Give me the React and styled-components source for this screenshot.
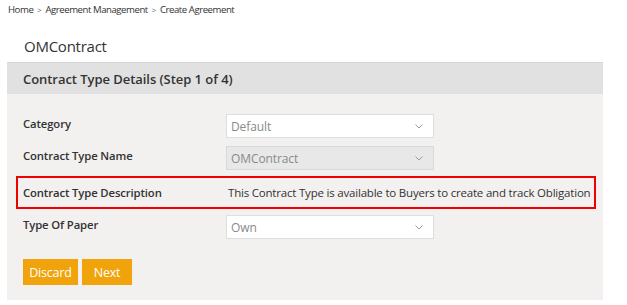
import React from "react";
import styled, { createGlobalStyle } from "styled-components";

const Global = createGlobalStyle`
  html, body { margin: 0; padding: 0; background: #ffffff; }
  body { font-family: "Open Sans", "Noto Sans", sans-serif; color: #333; }
`;

const Page = styled.div`
  width: 627px;
  height: 305px;
  overflow: hidden;
`;

const Breadcrumb = styled.div`
  display: flex;
  align-items: center;
  gap: 4px;
  padding: 2px 0 0 8px;
  height: 14px;
  font-size: 9.6px;
  color: #333;
  letter-spacing: -0.45px;
`;

const Sep = styled.span`
  font-size: 8px;
  color: #666;
`;

const Title = styled.h1`
  margin: 0;
  padding: 20px 0 0 24px;
  height: 26px;
  font-size: 15px;
  font-weight: 400;
  color: #333;
  letter-spacing: -0.25px;
`;

const Panel = styled.section`
  margin: 0 0 0 7px;
  width: 596px;
  background: #f2f1f0;
`;

const PanelHeader = styled.div`
  height: 31px;
  border-top: 1px solid #d6d6d6;
  background: #e1e1e1;
  display: flex;
  align-items: center;
  padding-left: 16px;
  font-size: 13px;
  font-weight: 600;
  color: #333;
  letter-spacing: -0.05px;
`;

const Form = styled.div`
  display: flex;
  flex-direction: column;
  gap: 4px;
  padding: 18px 7px 0 9px;
`;

const Row = styled.div`
  display: grid;
  grid-template-columns: ${(p) => (p.$center ? "205px 1fr" : "203px 208px")};
  align-items: ${(p) => (p.$center ? "center" : "start")};
  min-height: ${(p) => (p.$center ? "29px" : "24px")};
  padding-left: 5px;
  border: 2px solid ${(p) => (p.$highlight ? "#f20000" : "transparent")};
`;

const Label = styled.div`
  font-size: 11.3px;
  font-weight: 600;
  color: #333;
  padding-top: ${(p) => (p.$center ? "0" : "2px")};
  letter-spacing: -0.12px;
`;

const Value = styled.div`
  font-size: 11.5px;
  color: #333;
  white-space: nowrap;
  letter-spacing: -0.2px;
`;

const Select = styled.div`
  box-sizing: border-box;
  height: 24px;
  display: flex;
  align-items: center;
  justify-content: space-between;
  padding: 0 10px 0 4px;
  background: ${(p) => (p.$disabled ? "#e8e8e8" : "#ffffff")};
  border: 1px solid ${(p) => (p.$disabled ? "#d9d9d9" : "#dedede")};
  font-size: 12px;
  color: #8a8a8a;
  letter-spacing: -0.1px;
`;

const Chevron = () => (
  <svg width="8" height="5" viewBox="0 0 8 5" fill="none">
    <path d="M0.5 0.5 L4 4 L7.5 0.5" stroke="#999" strokeWidth="1" />
  </svg>
);

const Actions = styled.div`
  display: flex;
  gap: 4px;
  padding: 18px 0 15px 16px;
`;

const Button = styled.button`
  height: 26px;
  width: ${(p) => p.$w}px;
  border: none;
  background: #f0a30a;
  color: #ffffff;
  font-family: "Open Sans", "Noto Sans", sans-serif;
  font-size: 12.5px;
  padding: 0;
  letter-spacing: -0.2px;
`;

export default function App() {
  return (
    <Page>
      <Global />
      <Breadcrumb>
        <span>Home</span>
        <Sep>&gt;</Sep>
        <span>Agreement Management</span>
        <Sep>&gt;</Sep>
        <span>Create Agreement</span>
      </Breadcrumb>
      <Title>OMContract</Title>
      <Panel>
        <PanelHeader>Contract Type Details (Step 1 of 4)</PanelHeader>
        <Form>
          <Row>
            <Label>Category</Label>
            <Select>
              <span>Default</span>
              <Chevron />
            </Select>
          </Row>
          <Row>
            <Label>Contract Type Name</Label>
            <Select $disabled>
              <span>OMContract</span>
              <Chevron />
            </Select>
          </Row>
          <Row $highlight $center>
            <Label $center>Contract Type Description</Label>
            <Value>This Contract Type is available to Buyers to create and track Obligation</Value>
          </Row>
          <Row>
            <Label>Type Of Paper</Label>
            <Select>
              <span>Own</span>
              <Chevron />
            </Select>
          </Row>
        </Form>
        <Actions>
          <Button $w={55}>Discard</Button>
          <Button $w={50}>Next</Button>
        </Actions>
      </Panel>
    </Page>
  );
}
